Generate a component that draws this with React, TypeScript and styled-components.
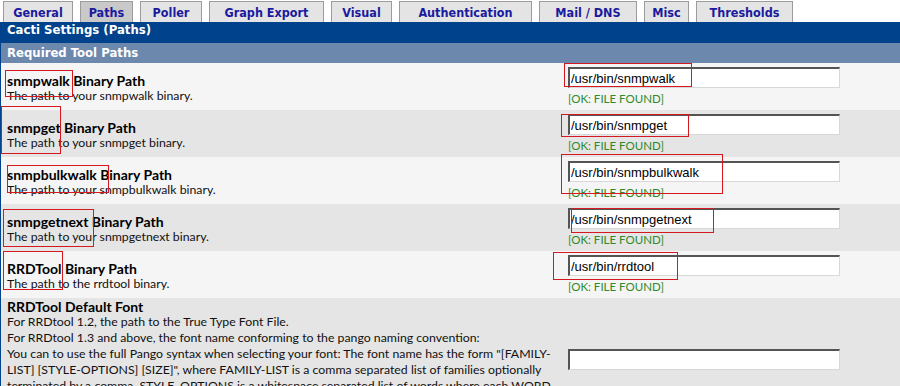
import React from 'react';
import styled, {createGlobalStyle} from 'styled-components';

const GlobalStyle = createGlobalStyle`
    html, body {
        margin: 0;
        padding: 0;
        background: #ffffff;
    }
    body {
        overflow: hidden;
    }
`;

const Page = styled.div`
    position: relative;
    width: 900px;
    height: 386px;
    overflow: hidden;
    background: #ffffff;
`;

const TabBar = styled.div`
    display: flex;
    align-items: flex-end;
    gap: 7px;
    height: 22px;
    padding-left: 3px;
`;

const Tab = styled.div<{$active?: boolean; $width: number}>`
    box-sizing: border-box;
    width: ${p => p.$width}px;
    height: 21px;
    display: flex;
    align-items: center;
    justify-content: center;
    background: ${p => (p.$active ? '#c9c9c9' : '#e4e4e4')};
    border: 1px solid #9c9c9c;
    border-bottom: none;
    font: bold 12.5px 'DejaVu Sans Condensed', Tahoma, sans-serif;
    color: #1a1a9e;
`;

const Panel = styled.div`
    border-left: 1px solid #00438c;
`;

const HeaderBar = styled.div`
    height: 21px;
    line-height: 21px;
    padding-left: 6px;
    background: #00438c;
    color: #ffffff;
    font: bold 13px 'DejaVu Sans Condensed', Tahoma, sans-serif;
`;

const SubHeader = styled(HeaderBar)`
    height: 20px;
    line-height: 20px;
    background: #6d88ad;
`;

const Row = styled.div<{$alt?: boolean}>`
    display: grid;
    grid-template-columns: 564px 1fr;
    min-height: 47px;
    background: ${p => (p.$alt ? '#e5e5e5' : '#f5f5f5')};
`;

const LabelCell = styled.div<{$top?: boolean}>`
    align-self: ${p => (p.$top ? 'start' : 'center')};
    padding: ${p => (p.$top ? '1px 0 11px 6px' : '2px 0 0 6px')};
    color: #000000;
`;

const Title = styled.div`
    font: bold 14px Lato, 'Open Sans', sans-serif;
    line-height: 15px;
`;

const Desc = styled.div`
    font: 12.3px Lato, 'Open Sans', sans-serif;
    line-height: 15px;
    white-space: nowrap;
    color: #111111;
`;

const HelpLine = styled(Desc)`
    line-height: 16px;
`;

const FieldCell = styled.div`
    align-self: center;
    padding-left: 3px;
`;

const PathInput = styled.input`
    display: block;
    box-sizing: border-box;
    width: 272px;
    height: 21px;
    margin: 0;
    padding: 0 0 0 1px;
    border-top: 2px solid #545454;
    border-left: 2px solid #545454;
    border-right: 1px solid #d8d8d8;
    border-bottom: 1px solid #d8d8d8;
    background: #ffffff;
    font: 13px 'Liberation Sans', Arial, sans-serif;
    color: #000000;
    outline: none;
`;

const Status = styled.div`
    margin-top: 3px;
    font: 11.5px Lato, 'Open Sans', sans-serif;
    line-height: 15px;
    color: #2f8a2a;
`;

const Mark = styled.div<{$x: number; $y: number; $w: number; $h: number}>`
    position: absolute;
    left: ${p => p.$x}px;
    top: ${p => p.$y}px;
    width: ${p => p.$w}px;
    height: ${p => p.$h}px;
    box-sizing: border-box;
    border: 1px solid #d41a20;
    pointer-events: none;
`;

const tabs = [
    {label: 'General', width: 70},
    {label: 'Paths', width: 53, active: true},
    {label: 'Poller', width: 62},
    {label: 'Graph Export', width: 115},
    {label: 'Visual', width: 61},
    {label: 'Authentication', width: 133},
    {label: 'Mail / DNS', width: 98},
    {label: 'Misc', width: 45},
    {label: 'Thresholds', width: 97},
];

const tools = [
    {name: 'snmpwalk', title: 'snmpwalk Binary Path', desc: 'The path to your snmpwalk binary.'},
    {name: 'snmpget', title: 'snmpget Binary Path', desc: 'The path to your snmpget binary.'},
    {name: 'snmpbulkwalk', title: 'snmpbulkwalk Binary Path', desc: 'The path to your snmpbulkwalk binary.'},
    {name: 'snmpgetnext', title: 'snmpgetnext Binary Path', desc: 'The path to your snmpgetnext binary.'},
    {name: 'rrdtool', title: 'RRDTool Binary Path', desc: 'The path to the rrdtool binary.'},
];

const fontHelp = [
    'For RRDtool 1.2, the path to the True Type Font File.',
    'For RRDtool 1.3 and above, the font name conforming to the pango naming convention:',
    'You can to use the full Pango syntax when selecting your font: The font name has the form "[FAMILY-',
    'LIST] [STYLE-OPTIONS] [SIZE]", where FAMILY-LIST is a comma separated list of families optionally',
    'terminated by a comma, STYLE_OPTIONS is a whitespace separated list of words where each WORD',
    'describes one of style, variant, weight, stretch, or gravity, and SIZE is a decimal number.',
];

// red annotation boxes drawn on top of the screenshot
const marks = [
    [5, 70, 73, 97],
    [1, 106, 61, 154],
    [7, 165, 109, 193],
    [3, 209, 94, 247],
    [3, 251, 63, 290],
    [564, 63, 692, 87],
    [561, 114, 689, 137],
    [561, 154, 723, 194],
    [571, 208, 714, 233],
    [553, 252, 678, 280],
];

export default function App() {
    return (
        <Page>
            <GlobalStyle />
            <TabBar>
                {tabs.map(t => (
                    <Tab key={t.label} $width={t.width} $active={t.active}>
                        {t.label}
                    </Tab>
                ))}
            </TabBar>
            <Panel>
                <HeaderBar>Cacti Settings (Paths)</HeaderBar>
                <SubHeader>Required Tool Paths</SubHeader>
                {tools.map((tool, i) => (
                    <Row key={tool.name} $alt={i % 2 === 1}>
                        <LabelCell>
                            <Title>{tool.title}</Title>
                            <Desc>{tool.desc}</Desc>
                        </LabelCell>
                        <FieldCell>
                            <PathInput defaultValue={`/usr/bin/${tool.name}`} />
                            <Status>[OK: FILE FOUND]</Status>
                        </FieldCell>
                    </Row>
                ))}
                <Row $alt>
                    <LabelCell $top>
                        <Title>RRDTool Default Font</Title>
                        {fontHelp.map(line => (
                            <HelpLine key={line}>{line}</HelpLine>
                        ))}
                    </LabelCell>
                    <FieldCell>
                        <PathInput defaultValue="" />
                    </FieldCell>
                </Row>
            </Panel>
            {marks.map(([x1, y1, x2, y2]) => (
                <Mark key={`${x1}-${y1}`} $x={x1} $y={y1} $w={x2 - x1} $h={y2 - y1} />
            ))}
        </Page>
    );
}
